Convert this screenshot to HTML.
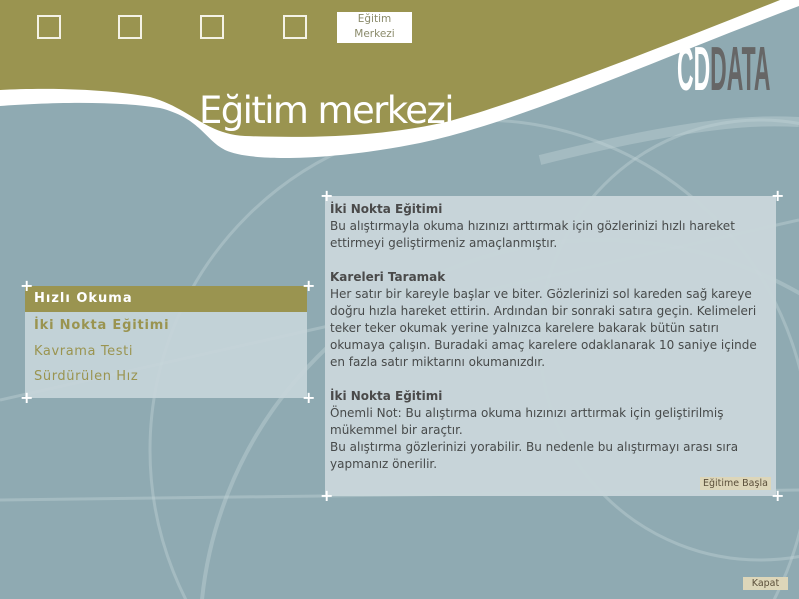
<!DOCTYPE html>
<html><head><meta charset="utf-8">
<style>
html,body{margin:0;width:799px;height:599px;overflow:hidden}
body{background:#8faab2;font-family:"DejaVu Sans","Liberation Sans",sans-serif;position:relative}
.abs{position:absolute}
.sq{position:absolute;top:15px;width:20px;height:20px;border:2px solid #f4f2e6}
.plus{position:absolute;color:#fff;font:bold 16px "DejaVu Sans",sans-serif;line-height:10px;width:10px;height:10px;text-align:center}
.panel{position:absolute;left:325px;top:196px;width:451px;height:300px;background:#c8d6da;opacity:.97}
.txt{position:absolute;left:330px;top:201px;width:436px;font-size:12px;line-height:17px;color:#474a4a;letter-spacing:0}
.txt b{color:#4a4a4a}
.btn{position:absolute;background:#ddd6b9;color:#5a4e3a;font-size:9.5px;line-height:13px;padding:0 3px}
</style></head><body>
<svg class="abs" style="left:0;top:0" width="799" height="599">
<g fill="none" stroke="#c4d4d8" stroke-opacity=".4">
<circle cx="600" cy="640" r="400" stroke-width="4"/>
<circle cx="760" cy="340" r="220" stroke-width="3"/>
<circle cx="480" cy="450" r="330" stroke-width="3"/>
<path d="M0,400 L799,220" stroke-width="3"/>
<path d="M0,500 L799,490" stroke-width="3"/>
<path d="M540,160 C700,120 760,120 799,122" stroke-width="10" stroke-opacity=".4"/>
</g>
<path d="M0,0 L799,0 L799,6 C650,62 520,122 420,143 C330,161 250,162 225,150 C205,140 200,118 160,108 C110,100 40,103 0,106 Z" fill="#fff"/>
<path d="M0,0 L780,0 C650,52 520,102 450,121 C380,138 300,138 245,136 C205,134 190,108 150,97 C100,88 40,88 0,90 Z" fill="#9a9450"/>
</svg>
<div class="sq" style="left:37px"></div>
<div class="sq" style="left:118px"></div>
<div class="sq" style="left:200px"></div>
<div class="sq" style="left:283px"></div>
<div class="abs" style="left:337px;top:12px;width:75px;height:31px;background:#fff;color:#8a8a6a;font-size:10.5px;line-height:15px;text-align:center">Eğitim<br>Merkezi</div>
<div class="abs" style="left:677px;top:40px;width:260px;height:60px;font:bold 62px 'Liberation Sans',sans-serif;line-height:60px;transform:scaleX(.37);transform-origin:0 0;white-space:nowrap;overflow:hidden"><span style="color:#fff">CD</span><span style="color:#666">DATA</span></div>
<div class="abs" style="left:199px;top:87px;font-size:37px;color:#fff;line-height:48px;letter-spacing:-1.6px">Eğitim merkezi</div>

<div class="abs" style="left:25px;top:286px;width:282px;height:112px;background:#c8d6da;opacity:.9"></div>
<div class="abs" style="left:25px;top:286px;width:282px;height:26px;background:#9a9450"></div>
<div class="abs" style="left:34px;top:290px;color:#fff;font-weight:bold;font-size:13px;letter-spacing:1px;line-height:18px">Hızlı Okuma</div>
<div class="abs" style="left:34px;top:317px;color:#9a9450;font-weight:bold;font-size:13px;letter-spacing:.8px;line-height:18px">İki Nokta Eğitimi</div>
<div class="abs" style="left:34px;top:343px;color:#9a9450;font-size:13px;letter-spacing:.6px;line-height:18px">Kavrama Testi</div>
<div class="abs" style="left:34px;top:368px;color:#9a9450;font-size:13px;letter-spacing:.6px;line-height:18px">Sürdürülen Hız</div>
<div class="plus" style="left:20px;top:281px">+</div>
<div class="plus" style="left:302px;top:281px">+</div>
<div class="plus" style="left:20px;top:393px">+</div>
<div class="plus" style="left:302px;top:393px">+</div>

<div class="panel"></div>
<div class="txt"><b>İki Nokta Eğitimi</b><br>Bu alıştırmayla okuma hızınızı arttırmak için gözlerinizi hızlı hareket ettirmeyi geliştirmeniz amaçlanmıştır.<br><br><b>Kareleri Taramak</b><br>Her satır bir kareyle başlar ve biter. Gözlerinizi sol kareden sağ kareye doğru hızla hareket ettirin. Ardından bir sonraki satıra geçin. Kelimeleri teker teker okumak yerine yalnızca karelere bakarak bütün satırı okumaya çalışın. Buradaki amaç karelere odaklanarak 10 saniye içinde en fazla satır miktarını okumanızdır.<br><br><b>İki Nokta Eğitimi</b><br>Önemli Not: Bu alıştırma okuma hızınızı arttırmak için geliştirilmiş mükemmel bir araçtır.<br>Bu alıştırma gözlerinizi yorabilir. Bu nedenle bu alıştırmayı arası sıra yapmanız önerilir.</div>
<div class="btn" style="left:700px;top:477px">Eğitime Başla</div>
<div class="plus" style="left:320px;top:191px">+</div>
<div class="plus" style="left:771px;top:191px">+</div>
<div class="plus" style="left:320px;top:491px">+</div>
<div class="plus" style="left:771px;top:491px">+</div>
<div class="btn" style="left:743px;top:577px;width:39px;text-align:center">Kapat</div>
</body></html>
